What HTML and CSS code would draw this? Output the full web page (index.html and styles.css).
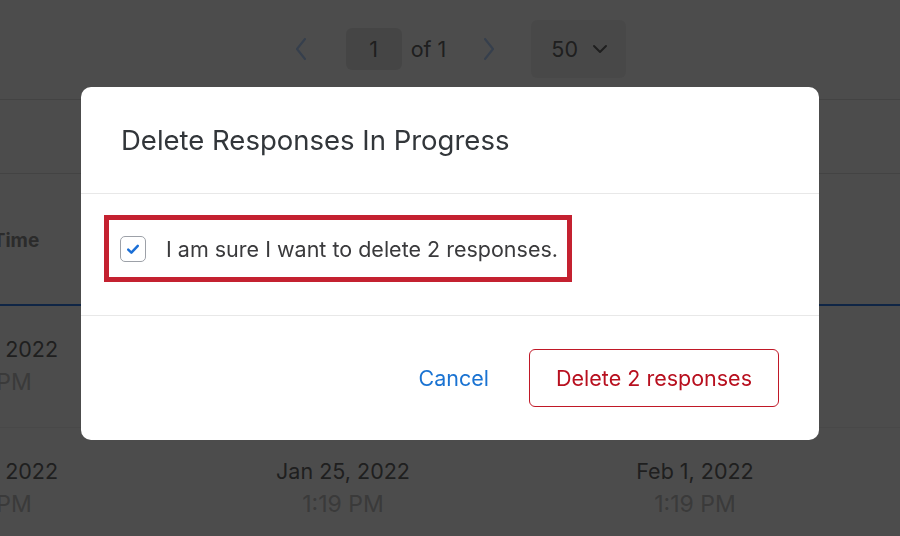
FILE: index.html
```html
<!DOCTYPE html>
<html>
<head>
<meta charset="utf-8">
<link rel="stylesheet" href="styles.css">
</head>
<body>
<div class="page">
  <div class="pager">
    <span class="pager-arrow">
      <svg width="14" height="24" viewBox="0 0 14 24"><path d="M11 2 L3 12 L11 22" fill="none" stroke="currentColor" stroke-width="2.2" stroke-linecap="round" stroke-linejoin="round"/></svg>
    </span>
    <span class="page-input">1</span>
    <span class="page-of">of 1</span>
    <span class="pager-arrow">
      <svg width="14" height="24" viewBox="0 0 14 24"><path d="M3 2 L11 12 L3 22" fill="none" stroke="currentColor" stroke-width="2.2" stroke-linecap="round" stroke-linejoin="round"/></svg>
    </span>
    <span class="per-page">50
      <svg width="16" height="10" viewBox="0 0 16 10"><path d="M2 2 L8 8 L14 2" fill="none" stroke="currentColor" stroke-width="2" stroke-linecap="round" stroke-linejoin="round"/></svg>
    </span>
  </div>
  <div class="toolbar"></div>
  <div class="table">
    <div class="thead">
      <div class="th">Start Time</div>
      <div class="th"></div>
      <div class="th"></div>
      <div class="th"></div>
    </div>
    <div class="tr">
      <div class="td"><span class="date">Jan 24, 2022</span><span class="time">1:19 PM</span></div>
      <div class="td"></div>
      <div class="td"></div>
      <div class="td"></div>
    </div>
    <div class="tr">
      <div class="td"><span class="date">Jan 24, 2022</span><span class="time">1:19 PM</span></div>
      <div class="td"><span class="date">Jan 25, 2022</span><span class="time">1:19 PM</span></div>
      <div class="td"><span class="date">Feb 1, 2022</span><span class="time">1:19 PM</span></div>
      <div class="td"></div>
    </div>
  </div>
</div>

<div class="backdrop"></div>

<div class="modal" role="dialog">
  <div class="modal-header">
    <h2 class="modal-title">Delete Responses In Progress</h2>
  </div>
  <div class="modal-body">
    <label class="confirm">
      <span class="checkbox">
        <svg width="26" height="26" viewBox="0 0 26 26"><path d="M8.2 13.6 L11.4 16.6 L17.8 9.8" fill="none" stroke="#1b6fd6" stroke-width="2.5" stroke-linecap="round" stroke-linejoin="round"/></svg>
      </span>
      <span class="confirm-text">I am sure I want to delete 2 responses.</span>
    </label>
  </div>
  <div class="modal-footer">
    <button class="btn-link">Cancel</button>
    <button class="btn-danger">Delete 2 responses</button>
  </div>
</div>
</body>
</html>
```

FILE: styles.css
```css
* { box-sizing: border-box; }

html, body {
  margin: 0;
  padding: 0;
  width: 900px;
  height: 536px;
  overflow: hidden;
  background: #ffffff;
  font-family: Inter, Roboto, "Liberation Sans", Arial, sans-serif;
}

.page {
  width: 900px;
  height: 536px;
  overflow: hidden;
}

/* pagination */
.pager {
  display: flex;
  align-items: center;
  justify-content: center;
  padding: 20px 0 21px 20px;
  height: 99px;
  color: #686868;
  font-size: 21.5px;
}
.pager-arrow {
  display: flex;
  color: #b4d2ff;
}
.pager-arrow:first-child { margin-right: 38px; }
.page-input {
  width: 56px;
  height: 42px;
  background: #e8e8e8;
  border-radius: 6px;
  display: flex;
  align-items: center;
  justify-content: center;
}
.page-of {
  margin: 0 36px 0 9px;
}
.per-page {
  margin-left: 35px;
  width: 95px;
  height: 58px;
  background: #f2f2f2;
  border-radius: 6px;
  display: flex;
  align-items: center;
  padding-left: 20px;
  gap: 14px;
}

.toolbar {
  height: 75px;
  border-top: 1px solid #e2e2e2;
  border-bottom: 1px solid #e2e2e2;
}

/* table */
.table {
  margin-left: -185px;
  width: 1408px;
}
.thead, .tr {
  display: grid;
  grid-template-columns: repeat(4, 352px);
}
.thead {
  height: 132px;
  border-bottom: 2px solid #357ce6;
  align-items: center;
}
.th {
  text-align: center;
  font-weight: 700;
  font-size: 19px;
  color: #8f8f8f;
  padding-top: 2px;
}
.tr {
  height: 122px;
  border-bottom: 1px solid #f0f0f0;
}
.td {
  display: flex;
  flex-direction: column;
  align-items: center;
  padding-top: 27px;
  font-size: 21.5px;
  line-height: 33px;
}
.date { color: #6a6a6a; }
.time { color: #c2c2c2; font-size: 23px; }

/* modal */
.backdrop {
  position: fixed;
  inset: 0;
  background: rgba(0, 0, 0, 0.7);
}

.modal {
  position: fixed;
  left: 81px;
  top: 87px;
  width: 738px;
  background: #ffffff;
  border-radius: 10px;
  overflow: hidden;
}
.modal-header {
  padding: 35px 40px;
  border-bottom: 1px solid #e8e8e8;
}
.modal-title {
  margin: 0;
  font-size: 27.5px;
  line-height: 36px;
  font-weight: 400;
  color: #32363a;
}
.modal-body {
  padding: 21px 23px 33px;
  border-bottom: 1px solid #e8e8e8;
}
.confirm {
  display: inline-flex;
  align-items: center;
  height: 67px;
  border: 5px solid #c42130;
  padding: 0 9px 0 11px;
  gap: 20px;
}
.checkbox {
  width: 26px;
  height: 26px;
  border: 1.5px solid #9da1a8;
  border-radius: 5px;
  display: flex;
  align-items: center;
  justify-content: center;
}
.checkbox svg { display: block; margin: -1.5px; }
.confirm-text {
  font-size: 21.5px;
  color: #3a3a3c;
}
.modal-footer {
  display: flex;
  justify-content: flex-end;
  align-items: center;
  gap: 40px;
  padding: 33px 40px;
}
.btn-link {
  border: none;
  background: none;
  padding: 0;
  font: inherit;
  font-size: 21.5px;
  color: #1a73d2;
}
.btn-danger {
  height: 58px;
  padding: 0 26px;
  border: 1.5px solid #c01827;
  border-radius: 6px;
  background: #ffffff;
  font: inherit;
  font-size: 21.5px;
  color: #b8101f;
}
```
